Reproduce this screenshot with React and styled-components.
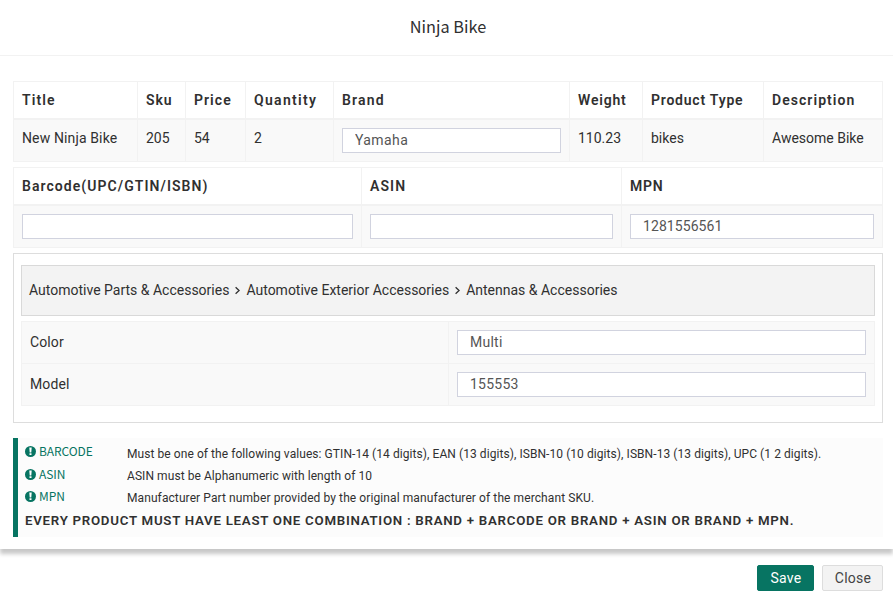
import React from "react";
import styled, { createGlobalStyle } from "styled-components";

const GlobalStyle = createGlobalStyle`
  * { box-sizing: border-box; }
  body { margin: 0; background: #fff; color: #303030; font: 14px/20px Roboto, sans-serif; }
`;

const Modal = styled.div`
  width: 893px;
  height: 602px;
  display: flex;
  flex-direction: column;
  overflow: hidden;
`;

const Header = styled.header`
  height: 56px;
  border-bottom: 1px solid #f2f2f2;
  display: flex;
  justify-content: center;
  padding: 14px 0 0 3px;
`;

const Title = styled.h1`
  margin: 0;
  font: 400 16.3px/24px "Noto Sans CJK SC", sans-serif;
`;

const Body = styled.main`
  flex: none;
  height: 493px;
  padding: 25px 10px 0 13px;
  background: #fff;
  box-shadow: 0 5px 4px rgba(0, 0, 0, 0.22);
`;

const Table = styled.div`
  display: grid;
  grid-template-columns: ${(p) => p.$columns};
  margin-bottom: 5px;
  border-right: 1px solid #f2f2f2;
  border-bottom: 1px solid #f2f2f2;
`;

const HeadCell = styled.div`
  height: 39px;
  padding: 8px;
  border: solid #f2f2f2;
  border-width: 1px 0 2px 1px;
  font-weight: 600;
  letter-spacing: ${(p) => p.$spacing}px;
  white-space: nowrap;
`;

const Cell = styled.div`
  height: 41px;
  padding: 8px;
  border-left: 1px solid #f2f2f2;
  background: #f9f9f9;
  letter-spacing: ${(p) => p.$spacing || 0}px;
  white-space: nowrap;
`;

const RuledCell = styled(Cell)`
  height: 42px;
  padding-top: 10px;
  border-top: 1px solid #f2f2f2;
`;

const FieldCell = styled(RuledCell)`
  padding-top: 8px;
`;

const Input = styled.input`
  display: block;
  width: 100%;
  height: 25px;
  padding: 0 12px 1px;
  border: 1px solid #d1d3df;
  border-radius: 0;
  outline: 0;
  background: #fff;
  color: #555;
  font: 14px/22px Roboto, sans-serif;
  letter-spacing: ${(p) => p.$spacing ?? 0.4}px;
`;

const Panel = styled.section`
  height: 170px;
  padding: 11px 7px 0;
  border: 1px solid #ddd;
  margin-bottom: 15px;
`;

const Breadcrumb = styled.nav`
  height: 51px;
  padding: 0 7px 2px;
  margin-bottom: 5px;
  display: flex;
  align-items: center;
  background: #f3f3f3;
  border: 1px solid #d9d9d9;
  white-space: nowrap;
`;

const Chevron = styled.svg`
  width: 5px;
  height: 9px;
  margin: 1px 6px 0;
  fill: none;
  stroke: #303030;
  stroke-width: 1.3;
`;

const Notice = styled.aside`
  height: 99px;
  padding: 3px 0 0 7px;
  border-left: 5px solid #077462;
  background: #fcfcfc;
`;

const Rule = styled.div`
  display: grid;
  grid-template-columns: 102px 1fr;
  height: 22px;
`;

const RuleName = styled.div`
  display: flex;
  align-items: center;
  gap: 3px;
  height: 22px;
  color: #077462;
  font: 12px/20px "Noto Sans CJK SC", sans-serif;
  letter-spacing: -0.1px;

  ${Rule}:first-child & {
    height: 20px;
  }
`;

const AlertIcon = styled.svg`
  width: 11px;
  height: 11px;
  flex: none;
`;

const RuleText = styled.div`
  padding-top: 3px;
  font-size: 12px;
  line-height: 20px;
  letter-spacing: ${(p) => p.$spacing}px;
  white-space: nowrap;
`;

const Summary = styled.p`
  margin: 4px 0 0;
  font-size: 13.3px;
  font-weight: 600;
  line-height: 20px;
  letter-spacing: 0.72px;
  white-space: nowrap;
`;

const Footer = styled.footer`
  display: flex;
  justify-content: flex-end;
  gap: 8px;
  padding: 16px 10px 0;
`;

const Button = styled.button`
  width: ${(p) => (p.$primary ? 57 : 61)}px;
  height: 26px;
  padding: 0 0 0 1px;
  border: 1px solid ${(p) => (p.$primary ? "#077462" : "#ddd")};
  border-radius: 2px;
  background: ${(p) => (p.$primary ? "#077462" : "#f3f3f3")};
  color: ${(p) => (p.$primary ? "#fff" : "#444")};
  font: 14px/24px Roboto, sans-serif;
  letter-spacing: 0.25px;
`;

const product = [
  { name: "Title", value: "New Ninja Bike", head: 1.1, cell: 0.13 },
  { name: "Sku", value: "205", head: 0.9 },
  { name: "Price", value: "54", head: 1.05 },
  { name: "Quantity", value: "2", head: 1.3 },
  { name: "Brand", value: "Yamaha", head: 1.15, editable: true },
  { name: "Weight", value: "110.23", head: 0.8 },
  { name: "Product Type", value: "bikes", head: 0.78 },
  { name: "Description", value: "Awesome Bike", head: 1.05 },
];

const identifiers = [
  { name: "Barcode(UPC/GTIN/ISBN)", value: "", head: 1.06 },
  { name: "ASIN", value: "", head: 1.1 },
  { name: "MPN", value: "1281556561", head: 0.8 },
];

const attributes = [
  ["Color", "Multi"],
  ["Model", "155553"],
];

const categories = [
  "Automotive Parts & Accessories",
  "Automotive Exterior Accessories",
  "Antennas & Accessories",
];

const rules = [
  ["BARCODE", "Must be one of the following values: GTIN-14 (14 digits), EAN (13 digits), ISBN-10 (10 digits), ISBN-13 (13 digits), UPC (1 2 digits).", 0.067],
  ["ASIN", "ASIN must be Alphanumeric with length of 10", 0.07],
  ["MPN", "Manufacturer Part number provided by the original manufacturer of the merchant SKU.", 0.092],
];

export default function App() {
  return (
    <Modal>
      <GlobalStyle />
      <Header><Title>Ninja Bike</Title></Header>
      <Body>
        <Table $columns="124px 48px 60px 88px 236px 73px 121px 1fr">
          {product.map(({ name, head }) => <HeadCell key={name} $spacing={head}>{name}</HeadCell>)}
          {product.map(({ name, value, cell, editable }) => (
            <Cell key={name} $spacing={cell}>
              {editable ? <Input aria-label={name} defaultValue={value} /> : value}
            </Cell>
          ))}
        </Table>
        <Table $columns="348px 260px 1fr">
          {identifiers.map(({ name, head }) => <HeadCell key={name} $spacing={head}>{name}</HeadCell>)}
          {identifiers.map(({ name, value }) => (
            <Cell key={name}><Input aria-label={name} defaultValue={value} $spacing={0.07} /></Cell>
          ))}
        </Table>
        <Panel>
          <Breadcrumb>
            {categories.map((category, i) => (
              <React.Fragment key={category}>
                {i > 0 && <Chevron viewBox="0 0 5 9"><path d="M.6 1.2 4.1 4.5.6 7.8" /></Chevron>}
                <span>{category}</span>
              </React.Fragment>
            ))}
          </Breadcrumb>
          <Table $columns="427px 1fr">
            {attributes.map(([name, value]) => (
              <React.Fragment key={name}>
                <RuledCell $spacing={0.1}>{name}</RuledCell>
                <FieldCell><Input aria-label={name} defaultValue={value} $spacing={0.25} /></FieldCell>
              </React.Fragment>
            ))}
          </Table>
        </Panel>
        <Notice>
          {rules.map(([name, text, spacing]) => (
            <Rule key={name}>
              <RuleName>
                <AlertIcon viewBox="0 0 11 11">
                  <circle cx="5.5" cy="5.5" r="5.5" fill="#077462" />
                  <path d="M4.3 1.5h2.4l-.4 4.9H4.7z M4.5 7.2h2v1.9h-2z" fill="#fff" />
                </AlertIcon>
                {name}
              </RuleName>
              <RuleText $spacing={spacing}>{text}</RuleText>
            </Rule>
          ))}
          <Summary>EVERY PRODUCT MUST HAVE LEAST ONE COMBINATION : BRAND + BARCODE OR BRAND + ASIN OR BRAND + MPN.</Summary>
        </Notice>
      </Body>
      <Footer>
        <Button $primary>Save</Button>
        <Button>Close</Button>
      </Footer>
    </Modal>
  );
}
